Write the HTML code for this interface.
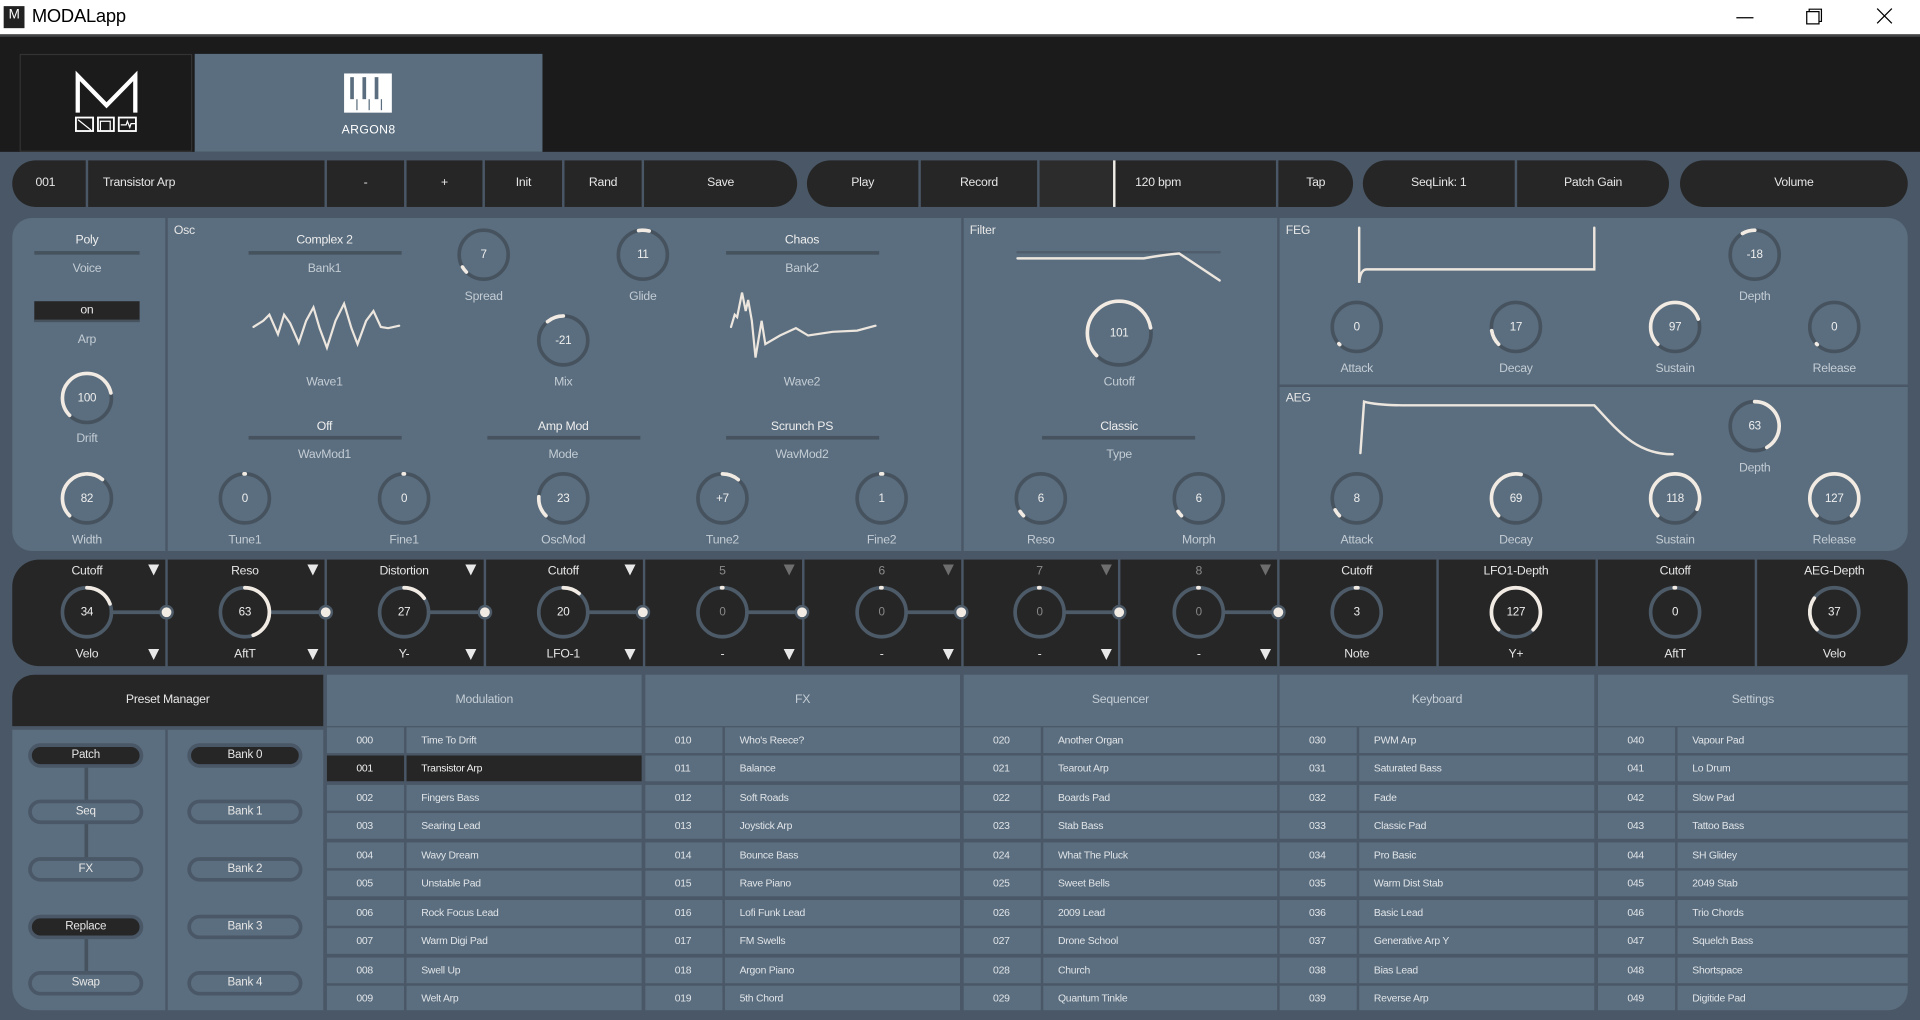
<!DOCTYPE html>
<html><head><meta charset="utf-8">
<style>
*{margin:0;padding:0;box-sizing:border-box}
html,body{width:1920px;height:1020px;overflow:hidden;background:#4a5766}
#w{position:absolute;left:0;top:0;width:1568px;height:833px;transform:scale(1.22449);transform-origin:0 0;font-family:"Liberation Sans",sans-serif;background:#4a5766;color:#e8e8e8;letter-spacing:-0.2px}
.a{position:absolute}
.s{position:absolute;background:#262626;top:131px;height:38px;line-height:38px;font-size:10px;text-align:center;color:#e6e6e6}
.p{position:absolute;background:#5b6e7f}
.l{position:absolute;font-size:10px;text-align:center;width:140px;margin-left:-70px;color:#c3ccd4;line-height:12px}
.v{color:#eeeeee}
.u{position:absolute;height:3px;background:#46535f}
.m{position:absolute;background:#262626;top:457px;height:87px}
.ml{position:absolute;font-size:10px;width:120px;margin-left:-60px;text-align:center;line-height:12px;color:#e6e6e6}
.tb{position:absolute;top:551px;height:42px;line-height:42px;background:#5b6e7f;text-align:center;font-size:10px;color:#c3ccd4}
.r{position:absolute;height:21px;line-height:21px;font-size:8.5px;color:#e0e4e8;background:#5b6e7f;padding-left:24px}
.sel{background:#262626!important;color:#f0f0f0}
.b{position:absolute;width:94px;height:20px;margin-left:-47px;border:3px solid #4a5766;border-radius:11px;text-align:center;font-size:9.5px;line-height:14px;color:#e6e6e6;background:#5b6e7f}
.b.d{background:#262626}
</style></head><body><div id="w">
<div class="a" style="left:0;top:0;width:1568px;height:28px;background:#fff"></div>
<div class="a" style="left:3px;top:5px;width:17px;height:18px;background:#222;color:#fff;font-size:11px;line-height:14px;text-align:center">M</div>
<div class="a" style="left:26px;top:5px;font-size:15px;color:#000;line-height:18px">MODALapp</div>
<svg class="a" style="left:1410px;top:0" width="150" height="28"><g stroke="#000" stroke-width="1" fill="none"><path d="M8 14.5 H22"/><rect x="65.5" y="9.5" width="10" height="10" fill="#fff"/><path d="M67.5 9.5 V7.5 H77.5 V17.5 H75.5"/><path d="M123 7 L135 19 M135 7 L123 19"/></g></svg>
<div class="a" style="left:0;top:28px;width:1568px;height:2px;background:#444"></div>
<div class="a" style="left:0;top:30px;width:1568px;height:94px;background:#1b1b1b"></div>
<div class="a" style="left:16px;top:44px;width:141px;height:80px;background:#1b1b1b;border:1px solid #333"></div>
<div class="a" style="left:159px;top:44px;width:284px;height:80px;background:#5b6e7f"></div>
<div class="a" style="left:260px;top:101px;width:82px;text-align:center;font-size:10px;color:#fff;letter-spacing:0.3px">ARGON8</div>
<div class="s" style="left:10px;width:60px;border-radius:19px 0 0 19px;text-align:left;padding-left:19px">001</div>
<div class="s" style="left:72px;width:193px;text-align:left;padding-left:12px">Transistor Arp</div>
<div class="s" style="left:267px;width:63px">-</div>
<div class="s" style="left:332px;width:62px">+</div>
<div class="s" style="left:396px;width:63px">Init</div>
<div class="s" style="left:461px;width:63px">Rand</div>
<div class="s" style="left:526px;width:125px;border-radius:0 19px 19px 0">Save</div>
<div class="s" style="left:659px;width:91px;border-radius:19px 0 0 19px">Play</div>
<div class="s" style="left:752px;width:95px">Record</div>
<div class="s" style="left:849px;width:60px;background:#2c2c2c"></div>
<div class="a" style="left:909px;top:131px;width:2px;height:38px;background:#f0ece6"></div>
<div class="s" style="left:911px;width:131px;text-align:left;padding-left:16px">120 bpm</div>
<div class="s" style="left:1044px;width:61px;border-radius:0 19px 19px 0">Tap</div>
<div class="s" style="left:1113px;width:124px;border-radius:19px 0 0 19px">SeqLink: 1</div>
<div class="s" style="left:1239px;width:124px;border-radius:0 19px 19px 0">Patch Gain</div>
<div class="s" style="left:1372px;width:186px;border-radius:19px">Volume</div>
<div class="p" style="left:10px;top:178px;width:125px;height:272px;border-radius:16px 0 0 16px"></div>
<div class="p" style="left:137px;top:178px;width:648px;height:272px"></div>
<div class="p" style="left:787px;top:178px;width:256px;height:272px"></div>
<div class="p" style="left:1045px;top:178px;width:513px;height:136px;border-radius:0 16px 0 0"></div>
<div class="p" style="left:1045px;top:316px;width:513px;height:134px;border-radius:0 0 16px 0"></div>
<div class="l v" style="left:71px;top:191px">Poly</div><div class="u" style="left:28px;top:205px;width:86px"></div>
<div class="l" style="left:71px;top:214px">Voice</div>
<div class="a" style="left:28px;top:246px;width:86px;height:17px;background:#262626;border-bottom:2px solid #46535f;text-align:center;font-size:10px;line-height:16px">on</div>
<div class="l" style="left:71px;top:272px">Arp</div>
<div class="l" style="left:71px;top:353px">Drift</div>
<div class="l" style="left:71px;top:436px">Width</div>
<div class="a" style="left:142px;top:183px;font-size:10px;color:#e6e6e6">Osc</div>
<div class="l v" style="left:265px;top:191px">Complex 2</div><div class="u" style="left:203px;top:205px;width:125px"></div>
<div class="l" style="left:265px;top:214px">Bank1</div>
<div class="l" style="left:265px;top:307px">Wave1</div>
<div class="l" style="left:395px;top:237px">Spread</div>
<div class="l" style="left:525px;top:237px">Glide</div>
<div class="l" style="left:460px;top:307px">Mix</div>
<div class="l v" style="left:655px;top:191px">Chaos</div><div class="u" style="left:593px;top:205px;width:125px"></div>
<div class="l" style="left:655px;top:214px">Bank2</div>
<div class="l" style="left:655px;top:307px">Wave2</div>
<div class="l v" style="left:265px;top:343px">Off</div><div class="u" style="left:203px;top:356px;width:125px"></div>
<div class="l" style="left:265px;top:366px">WavMod1</div>
<div class="l v" style="left:460px;top:343px">Amp Mod</div><div class="u" style="left:398px;top:356px;width:125px"></div>
<div class="l" style="left:460px;top:366px">Mode</div>
<div class="l v" style="left:655px;top:343px">Scrunch PS</div><div class="u" style="left:593px;top:356px;width:125px"></div>
<div class="l" style="left:655px;top:366px">WavMod2</div>
<div class="l" style="left:200px;top:436px">Tune1</div>
<div class="l" style="left:330px;top:436px">Fine1</div>
<div class="l" style="left:460px;top:436px">OscMod</div>
<div class="l" style="left:590px;top:436px">Tune2</div>
<div class="l" style="left:720px;top:436px">Fine2</div>
<div class="a" style="left:792px;top:183px;font-size:10px;color:#e6e6e6">Filter</div>
<div class="l" style="left:914px;top:307px">Cutoff</div>
<div class="l v" style="left:914px;top:343px">Classic</div><div class="u" style="left:851px;top:356px;width:125px"></div>
<div class="l" style="left:914px;top:366px">Type</div>
<div class="l" style="left:850px;top:436px">Reso</div>
<div class="l" style="left:979px;top:436px">Morph</div>
<div class="a" style="left:1050px;top:183px;font-size:10px;color:#e6e6e6">FEG</div>
<div class="a" style="left:1050px;top:320px;font-size:10px;color:#e6e6e6">AEG</div>
<div class="l" style="left:1433px;top:237px">Depth</div>
<div class="l" style="left:1108px;top:296px">Attack</div>
<div class="l" style="left:1238px;top:296px">Decay</div>
<div class="l" style="left:1368px;top:296px">Sustain</div>
<div class="l" style="left:1498px;top:296px">Release</div>
<div class="l" style="left:1433px;top:377px">Depth</div>
<div class="l" style="left:1108px;top:436px">Attack</div>
<div class="l" style="left:1238px;top:436px">Decay</div>
<div class="l" style="left:1368px;top:436px">Sustain</div>
<div class="l" style="left:1498px;top:436px">Release</div>
<div class="m" style="left:10px;width:125px;border-radius:22px 0 0 22px"></div>
<div class="m" style="left:137px;width:128px"></div>
<div class="m" style="left:267px;width:128px"></div>
<div class="m" style="left:397px;width:128px"></div>
<div class="m" style="left:527px;width:128px"></div>
<div class="m" style="left:657px;width:128px"></div>
<div class="m" style="left:787px;width:126px"></div>
<div class="m" style="left:915px;width:128px"></div>
<div class="m" style="left:1045px;width:128px"></div>
<div class="m" style="left:1175px;width:128px"></div>
<div class="m" style="left:1305px;width:128px"></div>
<div class="m" style="left:1435px;width:123px;border-radius:0 22px 22px 0"></div>
<div class="ml" style="left:71px;top:461px">Cutoff</div><div class="ml" style="left:71px;top:529px">Velo</div>
<div class="ml" style="left:200px;top:461px">Reso</div><div class="ml" style="left:200px;top:529px">AftT</div>
<div class="ml" style="left:330px;top:461px">Distortion</div><div class="ml" style="left:330px;top:529px">Y-</div>
<div class="ml" style="left:460px;top:461px">Cutoff</div><div class="ml" style="left:460px;top:529px">LFO-1</div>
<div class="ml" style="left:590px;top:461px;color:#8a8a8a">5</div><div class="ml" style="left:590px;top:529px">-</div>
<div class="ml" style="left:720px;top:461px;color:#8a8a8a">6</div><div class="ml" style="left:720px;top:529px">-</div>
<div class="ml" style="left:849px;top:461px;color:#8a8a8a">7</div><div class="ml" style="left:849px;top:529px">-</div>
<div class="ml" style="left:979px;top:461px;color:#8a8a8a">8</div><div class="ml" style="left:979px;top:529px">-</div>
<div class="ml" style="left:1108px;top:461px">Cutoff</div><div class="ml" style="left:1108px;top:529px">Note</div>
<div class="ml" style="left:1238px;top:461px">LFO1-Depth</div><div class="ml" style="left:1238px;top:529px">Y+</div>
<div class="ml" style="left:1368px;top:461px">Cutoff</div><div class="ml" style="left:1368px;top:529px">AftT</div>
<div class="ml" style="left:1498px;top:461px">AEG-Depth</div><div class="ml" style="left:1498px;top:529px">Velo</div>
<div class="tb" style="left:10px;width:254px;background:#262626;border-radius:18px 0 0 0;color:#e6e6e6">Preset Manager</div>
<div class="tb" style="left:267px;width:257px">Modulation</div>
<div class="tb" style="left:527px;width:257px">FX</div>
<div class="tb" style="left:787px;width:256px">Sequencer</div>
<div class="tb" style="left:1045px;width:257px">Keyboard</div>
<div class="tb" style="left:1305px;width:253px">Settings</div>
<div class="p" style="left:10px;top:596px;width:125px;height:229px;border-radius:0 0 0 18px"></div>
<div class="p" style="left:137px;top:596px;width:127px;height:229px"></div>
<div class="a" style="left:69px;top:620px;width:3px;height:85px;background:#46535f"></div>
<div class="a" style="left:69px;top:760px;width:3px;height:40px;background:#46535f"></div>
<div class="b d" style="left:70px;top:607px">Patch</div>
<div class="b" style="left:70px;top:653px">Seq</div>
<div class="b" style="left:70px;top:700px">FX</div>
<div class="b d" style="left:70px;top:747px">Replace</div>
<div class="b" style="left:70px;top:793px">Swap</div>
<div class="b d" style="left:200px;top:607px">Bank 0</div>
<div class="b" style="left:200px;top:653px">Bank 1</div>
<div class="b" style="left:200px;top:700px">Bank 2</div>
<div class="b" style="left:200px;top:747px">Bank 3</div>
<div class="b" style="left:200px;top:793px">Bank 4</div>
<div class="r" style="left:267px;top:594px;width:63px">000</div><div class="r" style="left:332px;top:594px;width:192px;padding-left:12px">Time To Drift</div>
<div class="r sel" style="left:267px;top:617px;width:63px">001</div><div class="r sel" style="left:332px;top:617px;width:192px;padding-left:12px">Transistor Arp</div>
<div class="r" style="left:267px;top:641px;width:63px">002</div><div class="r" style="left:332px;top:641px;width:192px;padding-left:12px">Fingers Bass</div>
<div class="r" style="left:267px;top:664px;width:63px">003</div><div class="r" style="left:332px;top:664px;width:192px;padding-left:12px">Searing Lead</div>
<div class="r" style="left:267px;top:688px;width:63px">004</div><div class="r" style="left:332px;top:688px;width:192px;padding-left:12px">Wavy Dream</div>
<div class="r" style="left:267px;top:711px;width:63px">005</div><div class="r" style="left:332px;top:711px;width:192px;padding-left:12px">Unstable Pad</div>
<div class="r" style="left:267px;top:735px;width:63px">006</div><div class="r" style="left:332px;top:735px;width:192px;padding-left:12px">Rock Focus Lead</div>
<div class="r" style="left:267px;top:758px;width:63px">007</div><div class="r" style="left:332px;top:758px;width:192px;padding-left:12px">Warm Digi Pad</div>
<div class="r" style="left:267px;top:782px;width:63px">008</div><div class="r" style="left:332px;top:782px;width:192px;padding-left:12px">Swell Up</div>
<div class="r" style="left:267px;top:805px;width:63px;height:20px">009</div><div class="r" style="left:332px;top:805px;width:192px;padding-left:12px;height:20px">Welt Arp</div>
<div class="r" style="left:527px;top:594px;width:63px">010</div><div class="r" style="left:592px;top:594px;width:192px;padding-left:12px">Who's Reece?</div>
<div class="r" style="left:527px;top:617px;width:63px">011</div><div class="r" style="left:592px;top:617px;width:192px;padding-left:12px">Balance</div>
<div class="r" style="left:527px;top:641px;width:63px">012</div><div class="r" style="left:592px;top:641px;width:192px;padding-left:12px">Soft Roads</div>
<div class="r" style="left:527px;top:664px;width:63px">013</div><div class="r" style="left:592px;top:664px;width:192px;padding-left:12px">Joystick Arp</div>
<div class="r" style="left:527px;top:688px;width:63px">014</div><div class="r" style="left:592px;top:688px;width:192px;padding-left:12px">Bounce Bass</div>
<div class="r" style="left:527px;top:711px;width:63px">015</div><div class="r" style="left:592px;top:711px;width:192px;padding-left:12px">Rave Piano</div>
<div class="r" style="left:527px;top:735px;width:63px">016</div><div class="r" style="left:592px;top:735px;width:192px;padding-left:12px">Lofi Funk Lead</div>
<div class="r" style="left:527px;top:758px;width:63px">017</div><div class="r" style="left:592px;top:758px;width:192px;padding-left:12px">FM Swells</div>
<div class="r" style="left:527px;top:782px;width:63px">018</div><div class="r" style="left:592px;top:782px;width:192px;padding-left:12px">Argon Piano</div>
<div class="r" style="left:527px;top:805px;width:63px;height:20px">019</div><div class="r" style="left:592px;top:805px;width:192px;padding-left:12px;height:20px">5th Chord</div>
<div class="r" style="left:787px;top:594px;width:63px">020</div><div class="r" style="left:852px;top:594px;width:191px;padding-left:12px">Another Organ</div>
<div class="r" style="left:787px;top:617px;width:63px">021</div><div class="r" style="left:852px;top:617px;width:191px;padding-left:12px">Tearout Arp</div>
<div class="r" style="left:787px;top:641px;width:63px">022</div><div class="r" style="left:852px;top:641px;width:191px;padding-left:12px">Boards Pad</div>
<div class="r" style="left:787px;top:664px;width:63px">023</div><div class="r" style="left:852px;top:664px;width:191px;padding-left:12px">Stab Bass</div>
<div class="r" style="left:787px;top:688px;width:63px">024</div><div class="r" style="left:852px;top:688px;width:191px;padding-left:12px">What The Pluck</div>
<div class="r" style="left:787px;top:711px;width:63px">025</div><div class="r" style="left:852px;top:711px;width:191px;padding-left:12px">Sweet Bells</div>
<div class="r" style="left:787px;top:735px;width:63px">026</div><div class="r" style="left:852px;top:735px;width:191px;padding-left:12px">2009 Lead</div>
<div class="r" style="left:787px;top:758px;width:63px">027</div><div class="r" style="left:852px;top:758px;width:191px;padding-left:12px">Drone School</div>
<div class="r" style="left:787px;top:782px;width:63px">028</div><div class="r" style="left:852px;top:782px;width:191px;padding-left:12px">Church</div>
<div class="r" style="left:787px;top:805px;width:63px;height:20px">029</div><div class="r" style="left:852px;top:805px;width:191px;padding-left:12px;height:20px">Quantum Tinkle</div>
<div class="r" style="left:1045px;top:594px;width:63px">030</div><div class="r" style="left:1110px;top:594px;width:192px;padding-left:12px">PWM Arp</div>
<div class="r" style="left:1045px;top:617px;width:63px">031</div><div class="r" style="left:1110px;top:617px;width:192px;padding-left:12px">Saturated Bass</div>
<div class="r" style="left:1045px;top:641px;width:63px">032</div><div class="r" style="left:1110px;top:641px;width:192px;padding-left:12px">Fade</div>
<div class="r" style="left:1045px;top:664px;width:63px">033</div><div class="r" style="left:1110px;top:664px;width:192px;padding-left:12px">Classic Pad</div>
<div class="r" style="left:1045px;top:688px;width:63px">034</div><div class="r" style="left:1110px;top:688px;width:192px;padding-left:12px">Pro Basic</div>
<div class="r" style="left:1045px;top:711px;width:63px">035</div><div class="r" style="left:1110px;top:711px;width:192px;padding-left:12px">Warm Dist Stab</div>
<div class="r" style="left:1045px;top:735px;width:63px">036</div><div class="r" style="left:1110px;top:735px;width:192px;padding-left:12px">Basic Lead</div>
<div class="r" style="left:1045px;top:758px;width:63px">037</div><div class="r" style="left:1110px;top:758px;width:192px;padding-left:12px">Generative Arp Y</div>
<div class="r" style="left:1045px;top:782px;width:63px">038</div><div class="r" style="left:1110px;top:782px;width:192px;padding-left:12px">Bias Lead</div>
<div class="r" style="left:1045px;top:805px;width:63px;height:20px">039</div><div class="r" style="left:1110px;top:805px;width:192px;padding-left:12px;height:20px">Reverse Arp</div>
<div class="r" style="left:1305px;top:594px;width:63px">040</div><div class="r" style="left:1370px;top:594px;width:188px;padding-left:12px">Vapour Pad</div>
<div class="r" style="left:1305px;top:617px;width:63px">041</div><div class="r" style="left:1370px;top:617px;width:188px;padding-left:12px">Lo Drum</div>
<div class="r" style="left:1305px;top:641px;width:63px">042</div><div class="r" style="left:1370px;top:641px;width:188px;padding-left:12px">Slow Pad</div>
<div class="r" style="left:1305px;top:664px;width:63px">043</div><div class="r" style="left:1370px;top:664px;width:188px;padding-left:12px">Tattoo Bass</div>
<div class="r" style="left:1305px;top:688px;width:63px">044</div><div class="r" style="left:1370px;top:688px;width:188px;padding-left:12px">SH Glidey</div>
<div class="r" style="left:1305px;top:711px;width:63px">045</div><div class="r" style="left:1370px;top:711px;width:188px;padding-left:12px">2049 Stab</div>
<div class="r" style="left:1305px;top:735px;width:63px">046</div><div class="r" style="left:1370px;top:735px;width:188px;padding-left:12px">Trio Chords</div>
<div class="r" style="left:1305px;top:758px;width:63px">047</div><div class="r" style="left:1370px;top:758px;width:188px;padding-left:12px">Squelch Bass</div>
<div class="r" style="left:1305px;top:782px;width:63px">048</div><div class="r" style="left:1370px;top:782px;width:188px;padding-left:12px">Shortspace</div>
<div class="r" style="left:1305px;top:805px;width:63px;height:20px">049</div><div class="r" style="left:1370px;top:805px;width:188px;padding-left:12px;height:20px;border-radius:0 0 16px 0">Digitide Pad</div>

<svg class="a" style="left:0;top:0" width="1568" height="833" viewBox="0 0 1568 833">
<g fill="none" stroke-linecap="round">
<path d="M63.5 92 V62 L87 86 L110.5 62 V92" stroke="#fff" stroke-width="3.5" stroke-linecap="butt" stroke-linejoin="miter"/>
<rect x="62" y="96" width="14" height="11" stroke="#fff" stroke-width="1.5"/>
<rect x="80" y="96" width="13" height="11" stroke="#fff" stroke-width="1.5"/>
<rect x="97" y="96" width="14" height="11" stroke="#fff" stroke-width="1.5"/>
<path d="M64 98 L74 106 M82 106 V99 H90 V106 M99 102 H103 L104 99 L106 104 L107 101 H110" stroke="#fff" stroke-width="1"/>
<rect x="281" y="60" width="39" height="32" fill="#fff" stroke="none"/>
<g fill="#5b6e7f" stroke="none"><rect x="286" y="63" width="3" height="18"/><rect x="296" y="63" width="3" height="18"/><rect x="306" y="63" width="3" height="18"/><rect x="291" y="81" width="1" height="9"/><rect x="301" y="81" width="1" height="9"/><rect x="311" y="81" width="1" height="9"/></g>
<polyline stroke="#ece6de" stroke-width="1.8" points="207,267 215,262 220,257 227,273 232,257 237,264 244,280 250,262 256,251 261,268 267,284 274,262 281,248 287,268 292,281 299,262 305,254 311,267 317,268 326,266"/>
<polyline stroke="#ece6de" stroke-width="1.8" points="597,267 600,257 602,259 606,239 609,254 611,245 614,262 617,292 622,262 625,281 637,274 650,268 660,274 680,271 700,270 715,266"/>
<path d="M831 206 H996" stroke="#4f5d6c" stroke-width="2"/>
<path d="M831 211 H934 Q950 208 963 207 L996 229" stroke="#ece6de" stroke-width="2"/>
<path d="M1110 186 V231 Q1111 220 1116 220 H1302 V186" stroke="#ece6de" stroke-width="2"/>
<path d="M1111 370 L1114 328 Q1125 331 1149 331 H1302 C1320 350 1335 371 1366 371" stroke="#ece6de" stroke-width="2"/>
</g>
<g font-family="Liberation Sans,sans-serif" font-size="10" fill="#e6e6e6" text-anchor="middle">
<g fill="none" stroke-width="3" stroke-linecap="round">
<g stroke="#46535f">
<circle cx="71" cy="325" r="20"/><circle cx="71" cy="407" r="20"/><circle cx="395" cy="208" r="20"/><circle cx="525" cy="208" r="20"/><circle cx="460" cy="278" r="20"/>
<circle cx="200" cy="407" r="20"/><circle cx="330" cy="407" r="20"/><circle cx="460" cy="407" r="20"/><circle cx="590" cy="407" r="20"/><circle cx="720" cy="407" r="20"/>
<circle cx="914" cy="272" r="26"/><circle cx="850" cy="407" r="20"/><circle cx="979" cy="407" r="20"/>
<circle cx="1433" cy="208" r="20"/><circle cx="1108" cy="267" r="20"/><circle cx="1238" cy="267" r="20"/><circle cx="1368" cy="267" r="20"/><circle cx="1498" cy="267" r="20"/>
<circle cx="1433" cy="348" r="20"/><circle cx="1108" cy="407" r="20"/><circle cx="1238" cy="407" r="20"/><circle cx="1368" cy="407" r="20"/><circle cx="1498" cy="407" r="20"/>
</g>
<g stroke="#4d5a68">
<circle cx="71" cy="500" r="20"/><circle cx="200" cy="500" r="20"/><circle cx="330" cy="500" r="20"/><circle cx="460" cy="500" r="20"/><circle cx="590" cy="500" r="20"/><circle cx="720" cy="500" r="20"/><circle cx="849" cy="500" r="20"/><circle cx="979" cy="500" r="20"/><circle cx="1108" cy="500" r="20"/><circle cx="1238" cy="500" r="20"/><circle cx="1368" cy="500" r="20"/><circle cx="1498" cy="500" r="20"/>
<path d="M91 500 H131 M220 500 H261 M350 500 H391 M480 500 H520 M610 500 H650 M740 500 H780 M869 500 H909 M999 500 H1039"/>
</g>
<g stroke="#f1ebe4">
<circle cx="71" cy="325" r="20" stroke-dasharray="74.3 200" transform="rotate(135 71 325)"/>
<circle cx="71" cy="407" r="20" stroke-dasharray="60.7 200" transform="rotate(135 71 407)"/>
<circle cx="395" cy="208" r="20" stroke-dasharray="5.2 200" transform="rotate(135 395 208)"/>
<circle cx="525" cy="208" r="20" stroke-dasharray="8.7 200" transform="rotate(260 525 208)"/>
<circle cx="460" cy="278" r="20" stroke-dasharray="14 200" transform="rotate(230 460 278)"/>
<circle cx="200" cy="407" r="20" stroke-dasharray="1 200" transform="rotate(-92 200 407)"/>
<circle cx="330" cy="407" r="20" stroke-dasharray="1 200" transform="rotate(-92 330 407)"/>
<circle cx="460" cy="407" r="20" stroke-dasharray="17 200" transform="rotate(135 460 407)"/>
<circle cx="590" cy="407" r="20" stroke-dasharray="14 200" transform="rotate(-90 590 407)"/>
<circle cx="720" cy="407" r="20" stroke-dasharray="1.5 200" transform="rotate(-92 720 407)"/>
<circle cx="914" cy="272" r="26" stroke-dasharray="97.6 300" transform="rotate(135 914 272)"/>
<circle cx="850" cy="407" r="20" stroke-dasharray="4.5 200" transform="rotate(135 850 407)"/>
<circle cx="979" cy="407" r="20" stroke-dasharray="4.5 200" transform="rotate(135 979 407)"/>
<circle cx="1433" cy="208" r="20" stroke-dasharray="10.5 200" transform="rotate(240 1433 208)"/>
<circle cx="1108" cy="267" r="20" stroke-dasharray="1 200" transform="rotate(134 1108 267)"/>
<circle cx="1238" cy="267" r="20" stroke-dasharray="12.6 200" transform="rotate(135 1238 267)"/>
<circle cx="1368" cy="267" r="20" stroke-dasharray="71.9 200" transform="rotate(135 1368 267)"/>
<circle cx="1498" cy="267" r="20" stroke-dasharray="1 200" transform="rotate(134 1498 267)"/>
<circle cx="1433" cy="348" r="20" stroke-dasharray="52.4 200" transform="rotate(-90 1433 348)"/>
<circle cx="1108" cy="407" r="20" stroke-dasharray="5.9 200" transform="rotate(135 1108 407)"/>
<circle cx="1238" cy="407" r="20" stroke-dasharray="51.3 200" transform="rotate(135 1238 407)"/>
<circle cx="1368" cy="407" r="20" stroke-dasharray="87.6 200" transform="rotate(135 1368 407)"/>
<circle cx="1498" cy="407" r="20" stroke-dasharray="94.2 200" transform="rotate(135 1498 407)"/>
<circle cx="71" cy="500" r="20" stroke-dasharray="24.4 200" transform="rotate(-90 71 500)"/>
<circle cx="200" cy="500" r="20" stroke-dasharray="55.8 200" transform="rotate(-90 200 500)"/>
<circle cx="330" cy="500" r="20" stroke-dasharray="19.2 200" transform="rotate(-90 330 500)"/>
<circle cx="460" cy="500" r="20" stroke-dasharray="14 200" transform="rotate(-90 460 500)"/>
<circle cx="590" cy="500" r="20" stroke-dasharray="1 200" transform="rotate(-92 590 500)"/>
<circle cx="720" cy="500" r="20" stroke-dasharray="1 200" transform="rotate(-92 720 500)"/>
<circle cx="849" cy="500" r="20" stroke-dasharray="1 200" transform="rotate(-92 849 500)"/>
<circle cx="979" cy="500" r="20" stroke-dasharray="1 200" transform="rotate(-92 979 500)"/>
<circle cx="1108" cy="500" r="20" stroke-dasharray="2 200" transform="rotate(-93 1108 500)"/>
<circle cx="1238" cy="500" r="20" stroke-dasharray="94.2 200" transform="rotate(135 1238 500)"/>
<circle cx="1368" cy="500" r="20" stroke-dasharray="1 200" transform="rotate(-92 1368 500)"/>
<circle cx="1498" cy="500" r="20" stroke-dasharray="27.9 200" transform="rotate(135 1498 500)"/>
</g>
</g>
<g fill="#f1ebe4" stroke="#4d5a68" stroke-width="2">
<circle cx="136" cy="500" r="5"/><circle cx="266" cy="500" r="5"/><circle cx="396" cy="500" r="5"/><circle cx="525" cy="500" r="5"/><circle cx="655" cy="500" r="5"/><circle cx="785" cy="500" r="5"/><circle cx="914" cy="500" r="5"/><circle cx="1044" cy="500" r="5"/>
</g>
<g stroke="none">
<path d="M121 461 h9 l-4.5 9z M251 461 h9 l-4.5 9z M380 461 h9 l-4.5 9z M510 461 h9 l-4.5 9z M121 530 h9 l-4.5 9z M251 530 h9 l-4.5 9z M380 530 h9 l-4.5 9z M510 530 h9 l-4.5 9z M640 530 h9 l-4.5 9z M770 530 h9 l-4.5 9z M899 530 h9 l-4.5 9z M1029 530 h9 l-4.5 9z" fill="#e8e8e8"/>
<path d="M640 461 h9 l-4.5 9z M770 461 h9 l-4.5 9z M899 461 h9 l-4.5 9z M1029 461 h9 l-4.5 9z" fill="#6e6e6e"/>
</g>
<g dominant-baseline="central" fill="#eeeeee" font-size="9.5">
<text x="71" y="325">100</text><text x="71" y="407">82</text><text x="395" y="208">7</text><text x="525" y="208">11</text><text x="460" y="278">-21</text>
<text x="200" y="407">0</text><text x="330" y="407">0</text><text x="460" y="407">23</text><text x="590" y="407">+7</text><text x="720" y="407">1</text>
<text x="914" y="272">101</text><text x="850" y="407">6</text><text x="979" y="407">6</text>
<text x="1433" y="208">-18</text><text x="1108" y="267">0</text><text x="1238" y="267">17</text><text x="1368" y="267">97</text><text x="1498" y="267">0</text>
<text x="1433" y="348">63</text><text x="1108" y="407">8</text><text x="1238" y="407">69</text><text x="1368" y="407">118</text><text x="1498" y="407">127</text>
<text x="71" y="500">34</text><text x="200" y="500">63</text><text x="330" y="500">27</text><text x="460" y="500">20</text>
<text x="590" y="500" fill="#888">0</text><text x="720" y="500" fill="#888">0</text><text x="849" y="500" fill="#888">0</text><text x="979" y="500" fill="#888">0</text>
<text x="1108" y="500">3</text><text x="1238" y="500">127</text><text x="1368" y="500">0</text><text x="1498" y="500">37</text>
</g>
</g>
</svg>
</div></body></html>
